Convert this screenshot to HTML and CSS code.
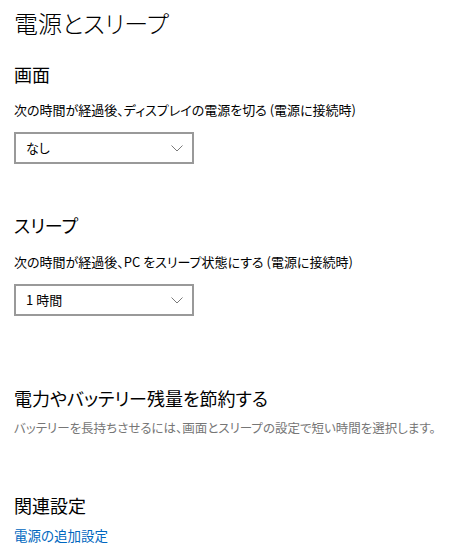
FILE: index.html
```html
<!DOCTYPE html>
<html lang="ja">
<head>
<meta charset="utf-8">
<title>電源とスリープ</title>
<link rel="stylesheet" href="styles.css">
</head>
<body>
<main class="page">
  <h1 class="title">電源とスリープ</h1>

  <h2 class="heading heading-screen">画面</h2>
  <p class="label">次の時間が経過後、ディスプレイの電源を切る (電源に接続時)</p>
  <div class="combo">
    <span class="combo-text">なし</span>
    <svg class="chev" width="12" height="7" viewBox="0 0 12 7"><polyline points="0.5,0.5 6,6 11.5,0.5" fill="none" stroke="#7a7a7a" stroke-width="1"/></svg>
  </div>

  <h2 class="heading heading-sleep">スリープ</h2>
  <p class="label">次の時間が経過後、PC をスリープ状態にする (電源に接続時)</p>
  <div class="combo">
    <span class="combo-text">1 時間</span>
    <svg class="chev" width="12" height="7" viewBox="0 0 12 7"><polyline points="0.5,0.5 6,6 11.5,0.5" fill="none" stroke="#7a7a7a" stroke-width="1"/></svg>
  </div>

  <h2 class="heading heading-save">電力やバッテリー残量を節約する</h2>
  <p class="desc">バッテリーを長持ちさせるには、画面とスリープの設定で短い時間を選択します。</p>

  <h2 class="heading heading-related">関連設定</h2>
  <a class="link" href="#">電源の追加設定</a>
</main>
</body>
</html>
```

FILE: styles.css
```css
html, body {
  margin: 0;
  padding: 0;
  background: #ffffff;
}
body {
  font-family: "Noto Sans CJK JP", "Noto Sans", sans-serif;
  color: #000000;
  font-feature-settings: "palt" 1;
}
.page {
  display: flex;
  flex-direction: column;
  align-items: flex-start;
  padding: 8px 0 0 14px;
}
.title {
  margin: 0;
  font-size: 24px;
  line-height: 30px;
  font-weight: 300;
}
.heading {
  margin: 0;
  font-size: 18px;
  line-height: 24px;
  font-weight: 400;
}
.heading-screen { margin-top: 24px; }
.heading-sleep { margin-top: 49px; }
.heading-save { margin-top: 70px; }
.heading-related { margin-top: 56px; }
.label {
  margin: 15px 0 0 0;
  font-size: 13px;
  line-height: 18px;
}
.heading-sleep + .label { margin-top: 16px; }
.combo {
  box-sizing: border-box;
  margin-top: 13px;
  width: 180px;
  height: 32px;
  border: 2px solid #999999;
  display: flex;
  align-items: center;
  justify-content: space-between;
  padding: 0 9px 0 10px;
}
.combo-text {
  font-size: 13px;
  line-height: 18px;
}
.chev {
  display: block;
}
.desc {
  margin: 9px 0 0 0;
  font-size: 12.5px;
  line-height: 18px;
  color: #767676;
}
.link {
  margin-top: 9px;
  font-size: 13.5px;
  line-height: 18px;
  color: #0067c0;
  text-decoration: none;
}
```
